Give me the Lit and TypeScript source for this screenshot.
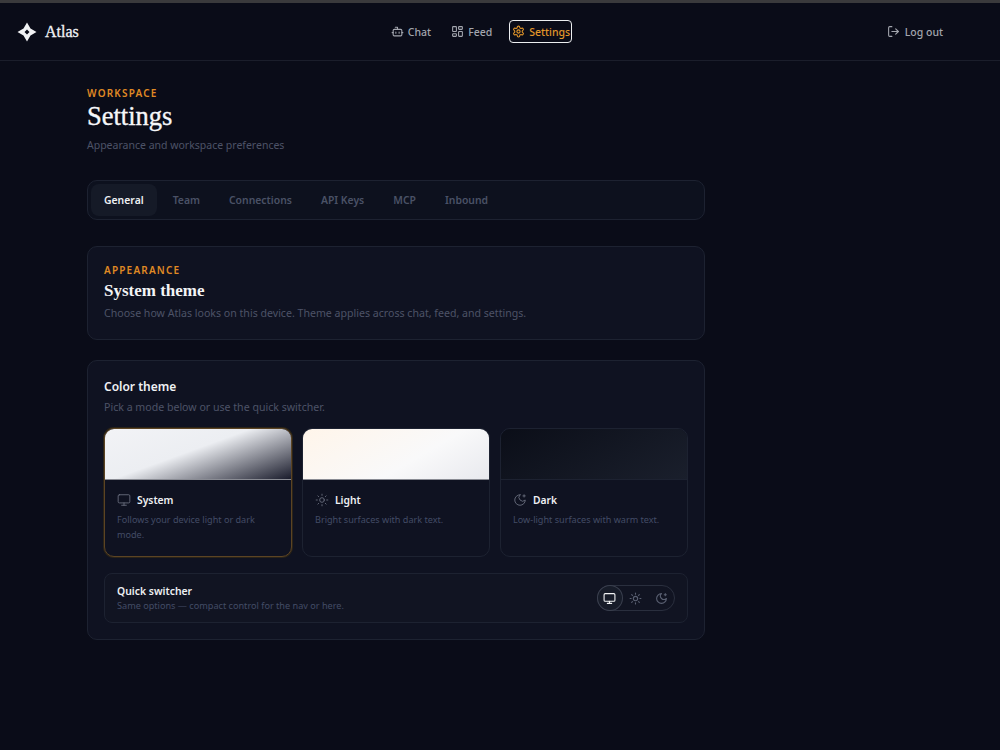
import { LitElement, html, css, svg } from 'lit'
import { customElement } from 'lit/decorators.js'

const icon = (body: unknown, size = 16, sw = 2) => html`
  <svg class="ico" width=${size} height=${size} viewBox="0 0 24 24" fill="none" stroke="currentColor"
    stroke-width=${sw} stroke-linecap="round" stroke-linejoin="round">${body}</svg>
`

const bot = svg`<path d="M12 8V4H8"/><rect x="4" y="8" width="16" height="12" rx="2"/><path d="M2 14h2"/><path d="M20 14h2"/><path d="M15 13v2"/><path d="M9 13v2"/>`
const grid = svg`<rect x="3" y="3" width="7" height="9" rx="1"/><rect x="14" y="3" width="7" height="5" rx="1"/><rect x="14" y="12" width="7" height="9" rx="1"/><rect x="3" y="16" width="7" height="5" rx="1"/>`
const gear = svg`<path d="M12.22 2h-.44a2 2 0 0 0-2 2v.18a2 2 0 0 1-1 1.73l-.43.25a2 2 0 0 1-2 0l-.15-.08a2 2 0 0 0-2.73.73l-.22.38a2 2 0 0 0 .73 2.73l.15.1a2 2 0 0 1 1 1.72v.51a2 2 0 0 1-1 1.74l-.15.09a2 2 0 0 0-.73 2.73l.22.38a2 2 0 0 0 2.73.73l.15-.08a2 2 0 0 1 2 0l.43.25a2 2 0 0 1 1 1.73V20a2 2 0 0 0 2 2h.44a2 2 0 0 0 2-2v-.18a2 2 0 0 1 1-1.73l.43-.25a2 2 0 0 1 2 0l.15.08a2 2 0 0 0 2.73-.73l.22-.39a2 2 0 0 0-.73-2.73l-.15-.08a2 2 0 0 1-1-1.74v-.5a2 2 0 0 1 1-1.74l.15-.09a2 2 0 0 0 .73-2.73l-.22-.38a2 2 0 0 0-2.73-.73l-.15.08a2 2 0 0 1-2 0l-.43-.25a2 2 0 0 1-1-1.73V4a2 2 0 0 0-2-2z"/><circle cx="12" cy="12" r="3"/>`
const logout = svg`<path d="M9 21H5a2 2 0 0 1-2-2V5a2 2 0 0 1 2-2h4"/><polyline points="16 17 21 12 16 7"/><line x1="21" y1="12" x2="9" y2="12"/>`
const monitor = svg`<rect width="20" height="14" x="2" y="3" rx="2"/><line x1="8" x2="16" y1="21" y2="21"/><line x1="12" x2="12" y1="17" y2="21"/>`
const sun = svg`<circle cx="12" cy="12" r="4"/><path d="M12 2v2"/><path d="M12 20v2"/><path d="m4.93 4.93 1.41 1.41"/><path d="m17.66 17.66 1.41 1.41"/><path d="M2 12h2"/><path d="M20 12h2"/><path d="m6.34 17.66-1.41 1.41"/><path d="m19.07 4.93-1.41 1.41"/>`
const moon = svg`<path d="M12 3a6 6 0 0 0 9 9 9 9 0 1 1-9-9Z"/><path d="M19 3v4"/><path d="M21 5h-4"/>`

const tabs = ['General', 'Team', 'Connections', 'API Keys', 'MCP', 'Inbound']

const modes = [
  { name: 'System', desc: 'Follows your device light or dark mode.', icon: monitor, cls: 'system' },
  { name: 'Light', desc: 'Bright surfaces with dark text.', icon: sun, cls: 'light' },
  { name: 'Dark', desc: 'Low-light surfaces with warm text.', icon: moon, cls: 'dark' },
]

@customElement('app-root')
export class AppRoot extends LitElement {
  static override styles = css`
    :host {
      display: block;
      min-height: 750px;
      background: #0a0c18;
      color: #f4f5f7;
      font-family: 'Noto Sans', 'Liberation Sans', sans-serif;
      border-top: 3px solid #3a3a3c;
      box-sizing: border-box;
    }
    .ico { display: block; flex: none; }
    .serif { font-family: 'Liberation Serif', serif; }

    nav {
      height: 58px;
      box-sizing: border-box;
      border-bottom: 1px solid #1b1e2b;
      display: grid;
      grid-template-columns: 1fr auto 1fr;
      align-items: center;
      padding: 0 57px 0 17px;
    }
    .brand { display: flex; align-items: center; gap: 8px; font-size: 16px; color: #f1f2f4; -webkit-text-stroke: 0.3px #f1f2f4; }
    .links { display: flex; align-items: center; gap: 15px; }
    .link {
      display: flex; align-items: center; gap: 4px;
      padding: 0 1px 0 2px; height: 21px; font-size: 10.5px; font-weight: 500;
      color: #a3a6ae; border: 1px solid transparent; border-radius: 4px;
    }
    .link.on { color: #e2962a; border-color: #eceef0; }
    .out { justify-self: end; display: flex; align-items: center; gap: 5px; font-size: 10.5px; font-weight: 500; color: #a3a6ae; }

    main { width: 618px; margin-left: 87px; padding-top: 26px; }
    .eyebrow { font-size: 10px; font-weight: 600; letter-spacing: 0.12em; color: #e08a24; line-height: 12px; }
    h1 { margin: 1px 0 0; font-size: 26.5px; font-weight: 400; line-height: 32px; color: #f6f7f9; -webkit-text-stroke: 0.35px #f6f7f9; }
    .sub { margin: 5px 0 0; font-size: 10.5px; line-height: 16px; color: #4d5367; }

    .tabs {
      margin-top: 27px; height: 40px; box-sizing: border-box;
      display: flex; align-items: center; gap: 0; padding: 0 3px;
      background: #0d111e; border: 1px solid #1d2231; border-radius: 10px;
    }
    .tab { padding: 0 13px; height: 32px; margin-right: 3px; display: flex; align-items: center; font-size: 10.4px; font-weight: 600; color: #4a5166; border-radius: 8px; }
    .tab.on { background: #151a27; color: #eef0f3; }

    .card { background: #0f1221; border: 1px solid #1d2231; border-radius: 10px; box-sizing: border-box; }
    .intro { margin-top: 26px; height: 94px; padding: 17px 16px 0; }
    h2 { margin: 3px 0 0; font-size: 17px; font-weight: 600; line-height: 24px; color: #f3f4f6; }
    .intro p { margin: 2px 0 0; font-size: 10.6px; line-height: 16px; color: #4d5367; }

    .theme { margin-top: 20px; height: 280px; padding: 15px 16px 0; }
    h3 { margin: 2px 0 0; font-size: 12px; font-weight: 600; line-height: 18px; color: #f0f1f4; }
    .theme > p { margin: 3px 0 0; font-size: 10.6px; line-height: 16px; color: #4d5367; }

    .modes { margin-top: 13px; display: grid; grid-template-columns: repeat(3, 1fr); gap: 10px; }
    .mode { height: 129px; box-sizing: border-box; border: 1px solid #1d2231; border-radius: 10px; overflow: hidden; background: #0f1221; }
    .mode.on { border-color: #5c4424; box-shadow: 0 0 0 1px #2a2318; }
    .swatch { height: 50px; border-bottom: 1px solid #8a8c94; }
    .swatch.system { background: linear-gradient(160deg, #f2f3f6 0%, #eceef2 45%, #1a1c2c 100%); }
    .swatch.light { background: linear-gradient(150deg, #fff5ea 0%, #f9f9fa 60%, #e8e9ee 100%); }
    .swatch.dark { background: linear-gradient(150deg, #0b0e18 0%, #1a1f2c 100%); border-bottom-color: #1d2231; }
    .mode-body { padding: 12px 12px 0; }
    .mode-name { display: flex; align-items: center; gap: 6px; font-size: 10.3px; font-weight: 600; color: #eef0f3; line-height: 16px; }
    .mode-name .ico { color: #6b7080; }
    .mode-desc { margin: 4px 0 0; font-size: 9.1px; line-height: 15px; color: #434c66; }

    .quick {
      margin-top: 16px; height: 50px; box-sizing: border-box; padding: 0 12px;
      display: flex; align-items: center; justify-content: space-between;
      border: 1px solid #1d2231; border-radius: 8px; background: #111422;
    }
    .q-title { font-size: 10.4px; font-weight: 600; line-height: 14px; color: #eef0f3; }
    .q-sub { margin-top: 1px; font-size: 9.15px; line-height: 14px; color: #434c66; }
    .switch { display: flex; align-items: center; width: 78px; height: 26px; box-sizing: border-box; border: 1px solid #2a2f3e; border-radius: 13px; }
    .sw { width: 26px; height: 26px; box-sizing: border-box; display: flex; align-items: center; justify-content: center; color: #5a6072; border-radius: 50%; margin: -1px 0; }
    .sw.on { color: #f2f3f5; border: 1px solid #3a3f4e; background: #171c29; margin-left: -1px; }
  `

  override render() {
    return html`
      <nav>
        <div class="brand">
          <svg width="20" height="20" viewBox="0 0 20 20" aria-hidden="true">
            <path fill="#f1f2f4" fill-rule="evenodd" d="M10 0.5 13.5 6.5 19.5 10 13.5 13.5 10 19.5 6.5 13.5 0.5 10 6.5 6.5ZM10 7.5 7.5 10 10 12.5 12.5 10Z"/>
          </svg>
          <span class="serif">Atlas</span>
        </div>
        <div class="links">
          <div class="link">${icon(bot, 13)}Chat</div>
          <div class="link">${icon(grid, 13)}Feed</div>
          <div class="link on">${icon(gear, 13)}Settings</div>
        </div>
        <div class="out">${icon(logout, 13)}Log out</div>
      </nav>
      <main>
        <div class="eyebrow">WORKSPACE</div>
        <h1 class="serif">Settings</h1>
        <p class="sub">Appearance and workspace preferences</p>
        <div class="tabs">
          ${tabs.map((t, i) => html`<div class="tab ${i === 0 ? 'on' : ''}">${t}</div>`)}
        </div>
        <section class="card intro">
          <div class="eyebrow">APPEARANCE</div>
          <h2 class="serif">System theme</h2>
          <p>Choose how Atlas looks on this device. Theme applies across chat, feed, and settings.</p>
        </section>
        <section class="card theme">
          <h3>Color theme</h3>
          <p>Pick a mode below or use the quick switcher.</p>
          <div class="modes">
            ${modes.map(
              (m, i) => html`
                <div class="mode ${i === 0 ? 'on' : ''}">
                  <div class="swatch ${m.cls}"></div>
                  <div class="mode-body">
                    <div class="mode-name">${icon(m.icon, 14, 1.5)}${m.name}</div>
                    <p class="mode-desc">${m.desc}</p>
                  </div>
                </div>
              `,
            )}
          </div>
          <div class="quick">
            <div>
              <div class="q-title">Quick switcher</div>
              <div class="q-sub">Same options — compact control for the nav or here.</div>
            </div>
            <div class="switch">
              <div class="sw on">${icon(monitor, 13)}</div>
              <div class="sw">${icon(sun, 13)}</div>
              <div class="sw">${icon(moon, 13)}</div>
            </div>
          </div>
        </section>
      </main>
    `
  }
}
